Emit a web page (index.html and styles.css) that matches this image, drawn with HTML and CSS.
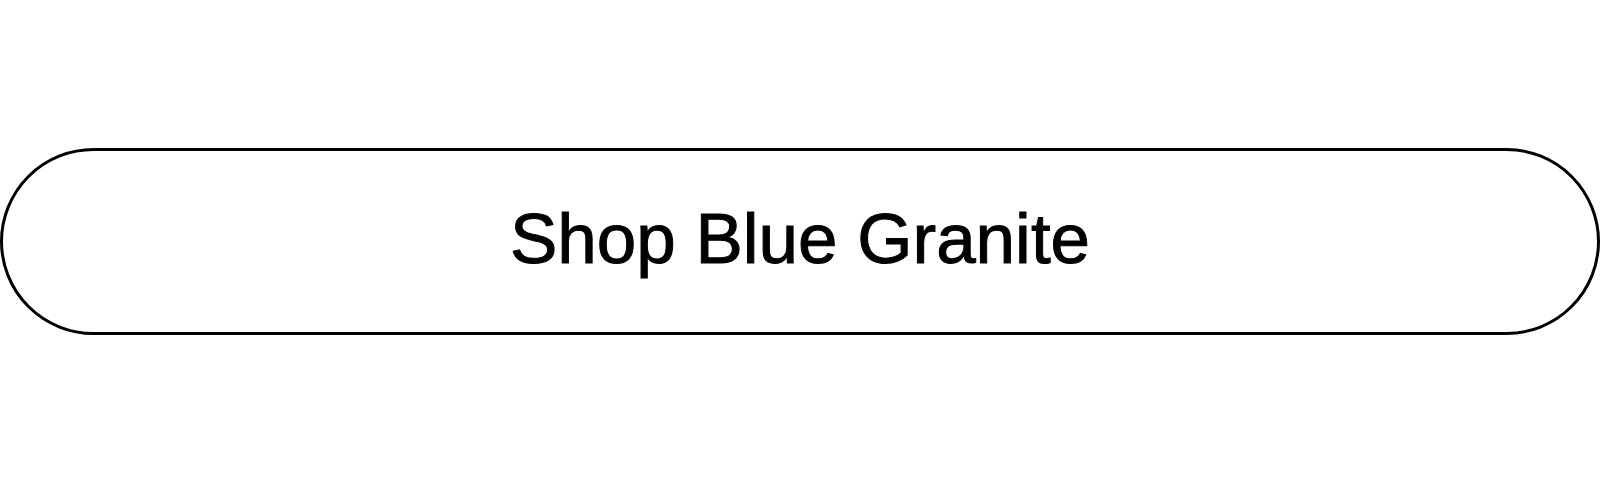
FILE: index.html
```html
<!DOCTYPE html>
<html lang="en">
<head>
<meta charset="utf-8">
<meta name="viewport" content="width=device-width, initial-scale=1">
<title>Shop Blue Granite</title>
<link rel="stylesheet" href="styles.css">
</head>
<body>
<main class="promo">
<a class="promo-link" href="#">Shop Blue Granite</a>
</main>
</body>
</html>
```

FILE: styles.css
```css
* {
  box-sizing: border-box;
}

body {
  margin: 0;
  background: #fff;
  color: #000;
  font-family: "Liberation Sans", Arial, sans-serif;
}

.promo {
  padding: 148px 0;
}

.promo-link {
  display: block;
  padding: 46px 24px 51px;
  border: 3px solid #000;
  border-radius: 96px;
  color: inherit;
  font-size: 71px;
  line-height: 84px;
  text-align: center;
  text-decoration: none;
  -webkit-text-stroke: 1px #000;
}
```
